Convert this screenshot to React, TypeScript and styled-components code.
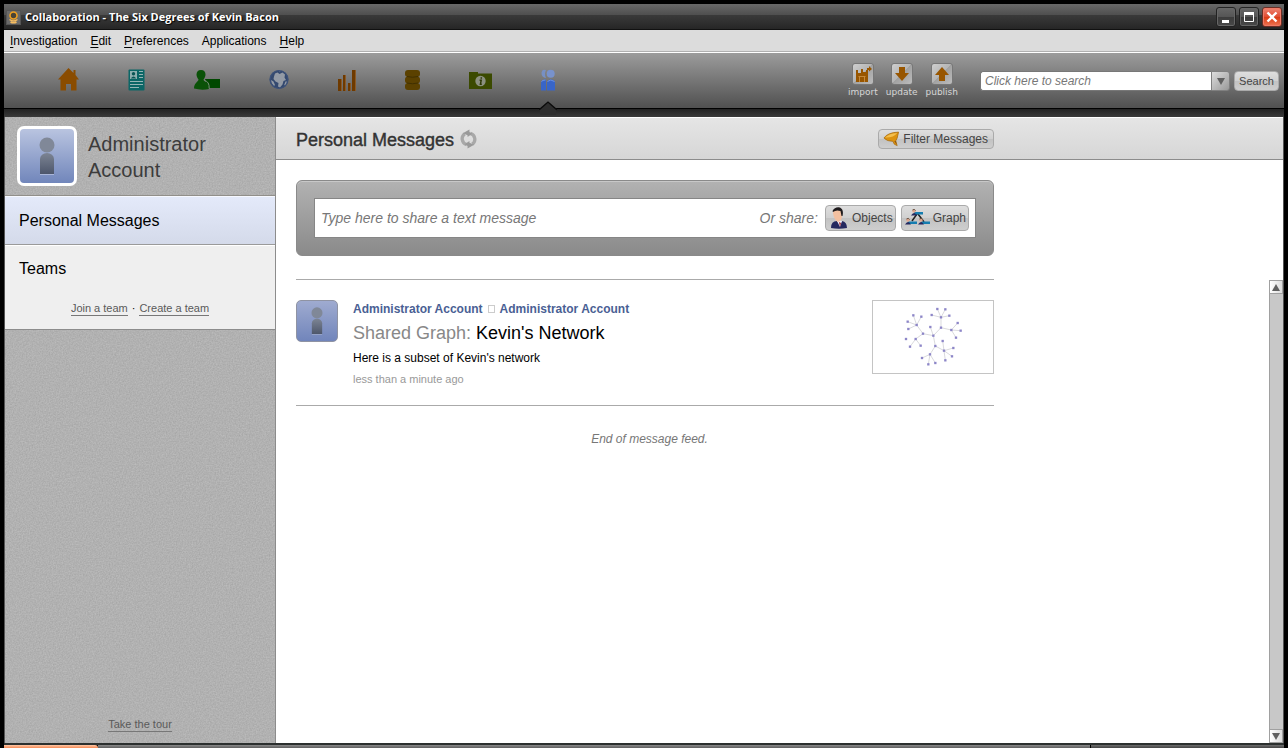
import React from "react";
import styled, { createGlobalStyle, css } from "styled-components";

const GlobalStyle = createGlobalStyle`
  *, *::before, *::after { box-sizing: border-box; }
  body {
    margin: 0;
    background: #000;
    font-family: "Liberation Sans", Arial, sans-serif;
    font-size: 12px;
    color: #000;
  }
  button, input { font-family: inherit; margin: 0; }
  svg { display: block; }
`;

const Frame = styled.div`
  display: flex;
  flex-direction: column;
  height: 100vh;
  min-height: 480px;
  padding: 4px 4px 0;
  background: #000;
`;

/* Title bar */

const TitleBar = styled.header`
  display: flex;
  align-items: center;
  height: 26px;
  flex: none;
  padding: 0 2px;
  background: linear-gradient(#686868 0, #4f4f4f 11px, #3a3a3a 11px, #262626 25px, #111 25px);
`;

const AppTitle = styled.h1`
  flex: 1;
  margin: 0 0 0 4px;
  font: bold 11px/16px "Open Sans", "Noto Sans", sans-serif;
  color: #fff;
  text-shadow: 1px 1px 1px #000;
`;

const WindowButtons = styled.div`
  display: flex;
  gap: 3px;
`;

const WindowButton = styled.button<{ $close?: boolean }>`
  width: 20px;
  height: 20px;
  padding: 0;
  display: flex;
  align-items: center;
  justify-content: center;
  border: 1px solid ${(p) => (p.$close ? "#6b2c22" : "#222")};
  border-radius: 3px;
  box-shadow: inset 0 0 0 1px ${(p) => (p.$close ? "#ee7a66" : "#666")};
  background: ${(p) =>
    p.$close
      ? "linear-gradient(#ee8573, #e0492f 50%, #d93a12 50%, #ee7452)"
      : "linear-gradient(#666, #555 50%, #3c3c3c 50%, #484848)"};
`;

/* Menu bar */

const MenuBar = styled.nav`
  display: flex;
  align-items: center;
  gap: 13px;
  height: 23px;
  flex: none;
  padding: 0 6px 1px;
  background: #dcdcdc;
  border-bottom: 1px solid #fff;
  box-shadow: inset 0 -1px #b0b0b0;
`;

const MenuButton = styled.button`
  padding: 0;
  border: 0;
  background: none;
  font-size: 12px;
  line-height: 16px;
  color: #000;
  u { text-underline-offset: 2px; }
`;

/* Toolbar */

const Toolbar = styled.div`
  display: flex;
  align-items: flex-start;
  height: 56px;
  flex: none;
  padding-left: 54px;
  padding-right: 5px;
  background: linear-gradient(#9c9c9c, #505050);
  border-bottom: 1px solid #000;
`;

const NavIcons = styled.nav`
  display: flex;
  gap: 49px;
  height: 55px;
  flex: 1;
`;

const NavButton = styled.button`
  position: relative;
  display: flex;
  align-items: center;
  height: 55px;
  padding: 0 0 2px;
  border: 0;
  background: none;
`;

const Pointer = styled.svg`
  position: absolute;
  left: 50%;
  bottom: -7px;
  transform: translateX(-50%);
`;

const Actions = styled.div`
  display: flex;
  gap: 8px;
  padding-top: 10px;
  margin-right: 22px;
`;

const Action = styled.button`
  display: flex;
  flex-direction: column;
  align-items: center;
  padding: 0;
  border: 0;
  background: none;
  font: 9px/12px "DejaVu Sans", sans-serif;
  color: #d6d6d6;
`;

const ActionTile = styled.span`
  display: flex;
  align-items: center;
  justify-content: center;
  width: 22px;
  height: 22px;
  margin-bottom: 1px;
  border: 1px solid #777;
  border-radius: 3px;
  background: linear-gradient(135deg, #cfcfcf, #b4b4b4 50%, #a2a2a2 50%, #bdbdbd);
`;

const SearchForm = styled.form`
  display: flex;
  align-items: center;
  padding-top: 18px;
`;

const raised = css`
  border: 1px solid #aaa;
  background: linear-gradient(#dedede, #d0d0d0 50%, #c2c2c2 50%, #cecece);
  color: #444;
`;

const SearchInput = styled.input`
  width: 231px;
  height: 20px;
  padding: 0 4px;
  border: 1px solid #777;
  border-right: 0;
  border-radius: 3px 0 0 3px;
  background: #fff;
  font-size: 12px;
  outline: 0;
  &::placeholder { color: #777; opacity: 1; font-style: italic; }
`;

const SearchScope = styled.button`
  display: flex;
  align-items: center;
  justify-content: center;
  width: 19px;
  height: 20px;
  padding: 0;
  border: 1px solid #808080;
  border-radius: 0 3px 3px 0;
  background: linear-gradient(135deg, #ddd, #999);
`;

const SearchButton = styled.button`
  ${raised}
  width: 45px;
  height: 20px;
  margin-left: 4px;
  padding: 0;
  border-radius: 4px;
  font-size: 11px;
`;

const DarkStrip = styled.div`
  height: 8px;
  flex: none;
  background: linear-gradient(#222, #3a3a3a);
`;

/* Body */

const Body = styled.div`
  display: flex;
  flex: 1;
  min-height: 0;
  border: solid #555;
  border-width: 0 1px;
  background: #fff;
`;

const Sidebar = styled.aside`
  position: relative;
  display: flex;
  flex-direction: column;
  width: 271px;
  flex: none;
  border-right: 1px solid #8c8c8c;
  background: #b0b0b0;
`;

const Grain = styled.svg`
  position: absolute;
  inset: 0;
  width: 100%;
  height: 100%;
`;

const Profile = styled.div`
  position: relative;
  display: flex;
  gap: 11px;
  padding: 9px 12px;
  height: 79px;
  border-bottom: 1px solid #918f8a;
`;

const ProfileName = styled.h2`
  margin: 5px 0 0;
  width: 140px;
  font-size: 20px;
  font-weight: normal;
  line-height: 26px;
  color: #3c3c3c;
`;

const Avatar = styled.span<{ $large?: boolean }>`
  display: flex;
  align-items: center;
  justify-content: center;
  flex: none;
  width: ${(p) => (p.$large ? 60 : 42)}px;
  height: ${(p) => (p.$large ? 60 : 42)}px;
  border: ${(p) => (p.$large ? "3px solid #fff" : "1px solid #8f93a3")};
  border-radius: ${(p) => (p.$large ? 7 : 5)}px;
  background: ${(p) =>
    p.$large ? "linear-gradient(#b9c4e0, #7186bb)" : "linear-gradient(#9fabd0, #7185bb)"};
`;

const SideItem = styled.a`
  position: relative;
  display: flex;
  align-items: center;
  height: 49px;
  padding: 2px 14px 0;
  border-bottom: 1px solid #9a9a9a;
  box-shadow: inset 0 1px #f6f8ff;
  background: linear-gradient(#e4eafa, #d4daea);
  font-size: 16px;
  color: #000;
  text-decoration: none;
`;

const Teams = styled.section`
  position: relative;
  height: 85px;
  padding: 14px 14px 0;
  border-top: 1px solid #fff;
  border-bottom: 1px solid #8c8c8c;
  background: #efefef;
`;

const TeamsTitle = styled.h3`
  margin: 0;
  font-size: 16px;
  font-weight: normal;
  line-height: 18px;
`;

const SideLinks = styled.p<{ $foot?: boolean }>`
  position: relative;
  display: flex;
  justify-content: center;
  gap: 4px;
  margin: ${(p) => (p.$foot ? "auto 0 11px" : "24px 0 0")};
  font-size: 11px;
  line-height: 13px;
`;

const SideLink = styled.a`
  color: #5a5a5a;
  text-decoration: none;
  border-bottom: 1px solid #777;
`;

const Main = styled.main`
  display: flex;
  flex-direction: column;
  flex: 1;
  min-width: 0;
`;

const PageHeader = styled.div`
  height: 43px;
  flex: none;
  padding: 0 20px;
  border-top: 1px solid #fff;
  border-bottom: 1px solid #8c8c8c;
  background: linear-gradient(#e5e5e5, #d6d6d6);
`;

const Column = styled.div`
  max-width: 698px;
`;

const HeaderRow = styled(Column)`
  display: flex;
  align-items: center;
  height: 41px;
`;

const PageTitle = styled.h2`
  margin: 0 6px 0 0;
  padding-top: 2px;
  font-size: 18px;
  font-weight: normal;
  line-height: 22px;
  color: #333;
  -webkit-text-stroke: 0.4px #333;
`;

const IconButton = styled.button`
  padding: 0;
  border: 0;
  background: none;
`;

const GreyButton = styled.button<{ $compact?: boolean }>`
  ${raised}
  display: flex;
  align-items: center;
  justify-content: center;
  gap: 3px;
  height: ${(p) => (p.$compact ? 20 : 26)}px;
  padding: ${(p) => (p.$compact ? "0 5px 0 4px" : "0 2px 0 3px")};
  border-radius: 4px;
  font-size: 12px;
  white-space: nowrap;
`;

const Spacer = styled.span`
  flex: 1;
`;

const ComposeArea = styled.div`
  flex: none;
  padding: 20px 20px 0;
`;

const Composer = styled(Column)`
  padding: 17px;
  border: 1px solid #8a8a8a;
  border-radius: 6px;
  box-shadow: inset 0 1px #c8c8c8;
  background: linear-gradient(#b2b2b2, #8a8a8a);
`;

const ComposeField = styled.div`
  display: flex;
  align-items: center;
  gap: 5px;
  height: 40px;
  padding: 0 6px;
  border: 1px solid #868686;
  background: #fff;
`;

const ComposeInput = styled.input`
  flex: 1;
  min-width: 0;
  height: 30px;
  padding: 0;
  border: 0;
  outline: 0;
  font-size: 14px;
  &::placeholder { color: #777; opacity: 1; font-style: italic; }
`;

const ShareLabel = styled.span`
  font-size: 14px;
  font-style: italic;
  color: #777;
  margin-right: 2px;
`;

const Divider = styled.hr`
  max-width: 698px;
  margin: 23px 0 0;
  border: 0;
  border-top: 1px solid #aaa;
`;

const FeedRow = styled.div`
  display: flex;
  flex: 1;
  min-height: 0;
`;

const Feed = styled.div`
  flex: 1;
  min-width: 0;
  overflow: hidden;
  padding: 0 20px;
`;

const Message = styled.article`
  display: flex;
  gap: 15px;
  max-width: 698px;
  padding: 20px 0 15px;
  border-bottom: 1px solid #aaa;
`;

const MessageBody = styled.div`
  flex: 1;
  min-width: 0;
`;

const People = styled.p`
  display: flex;
  align-items: center;
  gap: 5px;
  margin: 0;
  line-height: 18px;
  font-weight: bold;
  a { color: #4a5f94; text-decoration: none; }
`;

const Box = styled.span`
  width: 7px;
  height: 8px;
  border: 1px solid #ccc;
`;

const MessageTitle = styled.h3`
  margin: 0;
  font-size: 18px;
  font-weight: normal;
  line-height: 30px;
  span { color: #888; }
`;

const MessageText = styled.p`
  margin: 0;
  line-height: 20px;
`;

const MessageTime = styled.p`
  margin: 0;
  font-size: 11px;
  line-height: 22px;
  color: #999;
`;

const Thumbnail = styled.a`
  display: block;
  width: 122px;
  height: 74px;
  border: 1px solid #c4c4c4;
`;

const FeedEnd = styled.p`
  max-width: 698px;
  margin: 24px 0 0;
  padding-left: 9px;
  text-align: center;
  font-style: italic;
  line-height: 18px;
  color: #777;
`;

const ScrollTrack = styled.div`
  display: flex;
  flex-direction: column;
  justify-content: space-between;
  width: 14px;
  flex: none;
  border-left: 1px solid #a0a0a0;
  background: #c8c8c8;
`;

const ScrollButton = styled.button`
  display: flex;
  align-items: center;
  justify-content: center;
  height: 14px;
  padding: 0;
  border: 1px solid #a0a0a0;
  border-left: 0;
  background: linear-gradient(90deg, #fff, #dcdcdc);
`;

/* Bottom status bar */

const StatusBar = styled.footer`
  display: flex;
  height: 5px;
  flex: none;
  border-top: 2px solid #2c302f;
`;

const StatusSegment = styled.div<{ $kind: "progress" | "main" | "end" }>`
  ${(p) =>
    p.$kind === "progress"
      ? "flex: 0 0 94px; background: linear-gradient(#ffc9a8, #f58a55); border-top-right-radius: 3px;"
      : p.$kind === "main"
      ? "flex: 1; background: linear-gradient(#8a8a8a, #606060);"
      : "flex: 0 0 194px; background: linear-gradient(#6e6e6e, #444); border-left: 1px solid #000;"}
`;

const PersonGlyph = ({ w, h }: { w: number; h: number }) => (
  <svg width={w} height={h} viewBox="0 0 16 38">
    <defs>
      <linearGradient id="person" x1="0" y1="0" x2="0" y2="1">
        <stop offset="0" stopColor="#7c8493" />
        <stop offset="1" stopColor="#4d566b" />
      </linearGradient>
    </defs>
    <circle cx="8" cy="8" r="7.5" fill="#808898" />
    <path d="M1 37V22a7 6 0 0 1 14 0v15z" fill="url(#person)" />
    <path d="M1 37.5h14" stroke="#aab6d8" />
  </svg>
);

const AppLogo = () => (
  <svg width="15" height="15" viewBox="0 0 15 15">
    <rect width="15" height="15" fill="#555" />
    <rect x="1" y="1" width="13" height="13" fill="#6a6a6a" />
    <circle cx="7.5" cy="5.500" r="3.500" fill="#4a4436" stroke="#f0a020" strokeWidth="1.600" />
    <path d="M3.500 9.500q4 3 8 0M4.500 12q3 1.600 6 0" fill="none" stroke="#f5bc60" strokeWidth="1.500" />
  </svg>
);

const HomeIcon = () => (
  <svg width="21" height="23" viewBox="0 0 21 23">
    <path d="M10.500 0 15.500 5V2h2v5L21 11.500h-2.500V22.500h-5.500v-6.500H8v6.500H2.500V11.500H0z" fill="#8a4c00" />
  </svg>
);

const CardIcon = () => (
  <svg width="17" height="22" viewBox="0 0 17 22">
    <rect x=".5" y=".5" width="16" height="21" rx="1" fill="#0b6666" />
    <rect x="2" y="2" width="7" height="8" fill="#8fb0b0" />
    <circle cx="5.500" cy="4.700" r="1.700" fill="#0b5555" />
    <path d="M2.800 9.500q2.700-4 5.400 0z" fill="#0b5555" />
    <path d="M11 2.500h4M11 5.500h4M11 8.500h4M2 12.500h13M2 15.500h13M2 18.500h9" stroke="#95b5b5" />
  </svg>
);

const PersonCardIcon = () => (
  <svg width="26" height="20" viewBox="0 0 26 20">
    <path d="M11 9h15v9H14z" fill="#004800" />
    <path
      d="M7 0c3 0 4.500 2 4.500 4.500 0 2.300-1 3.500-2 5 0 2.500 5.500 2 5.500 7.500v2Q7.500 20.500 0 18.500C0 12.500 4.500 12 4.500 9.500c-1-1.500-2-2.700-2-5C2.500 2 4 0 7 0z"
      fill="#0a5208"
    />
    <path d="M10.500 10.500q5 1 4.700 8" fill="none" stroke="#789078" />
  </svg>
);

const GlobeIcon = () => (
  <svg width="20" height="21" viewBox="0 0 20 21">
    <circle cx="10" cy="10.500" r="9.300" fill="#34496f" />
    <path
      d="M6 4.500l2.500-1 2 1.500 3-1.500 2.500 2-.5 3 1.500 2.500-2.500 1-1 3.500-2.500 3-2-1 .5-3.500-3-1.500-2-2.500.5-2.500zM2 11l2.500 1.500L6 16l-1 1q-3-2.500-3-6zM9 1.500l3-.3-1 1.300zM16.500 12.500l1.500 0-1 3-2 1z"
      fill="#939aa5"
    />
    <circle cx="10" cy="10.500" r="9" fill="none" stroke="#3d527a" strokeWidth="1.200" />
  </svg>
);

const BarsIcon = () => (
  <svg width="18" height="22" viewBox="0 0 18 22" fill="#6e3a00">
    <path d="M0 10h4v12H0zM5 6h3v16H5zM10 14h3v8h-3zM14 1h4v21h-4z" />
    <path d="M3 10h1v12H3zM7 6h1v16H7zM12 14h1v8h-1zM17 1h1v21h-1z" fill="#8b5a28" />
  </svg>
);

const DatabaseIcon = () => (
  <svg width="15" height="22" viewBox="0 0 15 22">
    <g fill="#5b4100">
      <rect x="0" y="1" width="15" height="7" rx="3" />
      <rect x="0" y="7.500" width="15" height="7" rx="3" />
      <rect x="0" y="14" width="15" height="7" rx="3" />
      <path d="M3 5h9v12H3z" />
    </g>
    <path d="M2 7.500q5.500 1.500 11 0M2 14q5.500 1.500 11 0" fill="none" stroke="#403000" />
  </svg>
);

const FolderIcon = () => (
  <svg width="23" height="18" viewBox="0 0 23 18">
    <path d="M0 1h9v1.500h14V18H0z" fill="#3b4a00" />
    <circle cx="11.500" cy="10" r="5.200" fill="#8b9080" />
    <path d="M12.300 6.300v1.400M10.600 9.300h1.600l-.8 4h1.400" fill="none" stroke="#303a08" strokeWidth="1.500" />
  </svg>
);

const PeopleIcon = () => (
  <svg width="14" height="22" viewBox="0 0 14 22">
    <path d="M5 1Q1-.5.500 4q0 4.500 4.500 5Q3 5 5 1z" fill="#7790c4" />
    <circle cx="9.700" cy="4.800" r="4" fill="#7892cc" />
    <path d="M0 21.500V14q0-3.500 4.500-3.500h.5v11zM6 21.500V14q0-3.500 4-3.500t4 3.500v7.500z" fill="#3865c8" />
    <path d="M.5 12.500q1-1.500 4-1.500M6.500 12.500q3-3 7 0" fill="none" stroke="#6f93df" />
  </svg>
);

const ImportIcon = () => (
  <svg width="20" height="20" viewBox="0 0 20 20" fill="#985600">
    <path d="M3 6h2v3h3V5h2v3h3V6h2v12H3z" />
    <path d="M5.500 12.500h7M6.500 13v5M11.500 13v5" stroke="#c68a3c" />
    <path d="M14 4h2V2l3 3-3 2.500V6h-2z" />
  </svg>
);

const ArrowIcon = ({ up }: { up?: boolean }) => (
  <svg width="16" height="16" viewBox="0 0 16 16" fill="#985600">
    {up ? <path d="M8 1l7 8h-4v6H5V9H1z" /> : <path d="M8 15l7-8h-4V1H5v6H1z" />}
  </svg>
);

const Triangle = ({ up }: { up?: boolean }) => (
  <svg width="8" height="7" viewBox="0 0 8 7" fill="#606060">
    {up ? <path d="M4 0 8 7H0z" /> : <path d="M0 0h8L4 7z" />}
  </svg>
);

const RefreshIcon = () => (
  <svg width="17" height="20" viewBox="0 0 18 20">
    <g fill="none" stroke="#a8a8a8" strokeWidth="3.500">
      <path d="M7 16A6.500 6.500 0 0 1 5 4.500" />
      <path d="M11 4A6.500 6.500 0 0 1 13 15.500" />
    </g>
    <path d="M3 4l7-4v2.500l3 2-5 3.500V6zM15 16l-7 4v-2.500l-3-2 5-3.500v2z" fill="#9a9a9a" />
  </svg>
);

const FilterIcon = () => (
  <svg width="17" height="16" viewBox="0 0 18 16">
    <path d="M1 7Q5 1 16.500 .7L15 7l-1.500 3 1.500 5-3-1.500-1.500-3Q4 10.500 1 7z" fill="#dc920f" stroke="#a66c10" strokeWidth=".8" />
    <path d="M2 6.500Q7 2 15 1.700 11 7 2 6.500z" fill="#f4bf4d" />
    <path d="M12 10l1.500 0 1 4z" fill="#8c5410" />
  </svg>
);

const ManIcon = () => (
  <svg width="20" height="22" viewBox="0 0 20 22">
    <path d="M2 21q0-7 6-7l3 3 2-3q5 1 5 7-8 1.500-16 0z" fill="#25285f" />
    <path d="M7.500 13l3.500 7 2-6z" fill="#eef" />
    <path d="M10 15l1 5 1-4z" fill="#a02a2a" />
    <path d="M4 6q0-4 5-4 4 1 4 6 0 6-4 7-4-2-5-9z" fill="#f3c0a0" />
    <path d="M3.500 4Q6-.5 11 .5q4 2 2.500 8.500h-1L11.500 4Q7 2.500 4 5z" fill="#1e1a1c" />
  </svg>
);

const GraphIcon = () => (
  <svg width="25" height="18" viewBox="0 0 25 18">
    <path d="M12 5 7 12M13 5l6 8" stroke="#222" strokeWidth="1.500" />
    <path d="M9 3h9v2.500H9zM3 12.500h9V15H3zM16 12.500h9V15h-9z" fill="#157db0" />
    {[[9, 2], [3, 11], [16, 11]].map(([x, y]) => (
      <g key={x}>
        <path d={`M${x - 3} ${y + 4.500}q3-5 6 0z`} fill="#25285f" />
        <circle cx={x} cy={y} r="1.800" fill="#e0a890" />
        <path d={`M${x - 1.500} ${y - 1}q2-1.500 3 .5`} stroke="#432" fill="none" strokeWidth=".8" />
      </g>
    ))}
  </svg>
);

const edges = [
  [220, 137, 189, 131], [189, 131, 170, 105], [170, 105, 143, 95], [170, 105, 145, 117],
  [170, 105, 160, 76], [170, 105, 184, 80], [189, 131, 167, 147], [167, 147, 150, 170],
  [167, 147, 182, 167], [220, 137, 211, 111], [220, 137, 243, 113], [243, 113, 243, 82],
  [243, 82, 215, 75], [243, 82, 232, 57], [243, 82, 256, 58], [243, 82, 268, 77],
  [243, 113, 274, 120], [274, 120, 293, 99], [274, 120, 302, 122], [274, 120, 288, 143],
  [220, 137, 226, 168], [226, 168, 210, 193], [210, 193, 186, 204], [210, 193, 205, 223],
  [210, 193, 226, 219], [226, 168, 252, 182], [252, 182, 248, 153], [252, 182, 280, 174],
  [252, 182, 276, 199], [252, 182, 256, 211],
];
const nodes = [[220, 137], [138, 147], ...edges.map((e) => [e[2], e[3]])];

const NetworkGraph = () => (
  <svg width="120" height="72" viewBox="39 33 360 216">
    {edges.map((e, i) => (
      <line key={i} x1={e[0]} y1={e[1]} x2={e[2]} y2={e[3]} stroke="#d2d2d6" strokeWidth="2.500" />
    ))}
    {nodes.map(([x, y], i) => (
      <rect key={i} x={x - 3.500} y={y - 3.500} width="7" height="7" fill="#8d86c8" />
    ))}
  </svg>
);

const menus = ["Investigation", "Edit", "Preferences", "Applications", "Help"];

const navItems = [
  { label: "Home", Icon: HomeIcon },
  { label: "Dossier", Icon: CardIcon },
  { label: "Browser", Icon: PersonCardIcon },
  { label: "Map", Icon: GlobeIcon },
  { label: "Charts", Icon: BarsIcon },
  { label: "Data", Icon: DatabaseIcon },
  { label: "Files", Icon: FolderIcon },
  { label: "Collaboration", Icon: PeopleIcon, active: true },
];

export default function App() {
  return (
    <Frame>
      <GlobalStyle />
      <TitleBar>
        <AppLogo />
        <AppTitle>Collaboration - The Six Degrees of Kevin Bacon</AppTitle>
        <WindowButtons>
          <WindowButton aria-label="Minimize">
            <svg width="14" height="14"><path d="M3 10h7v3H3z" fill="#fff" /></svg>
          </WindowButton>
          <WindowButton aria-label="Maximize">
            <svg width="12" height="12"><path d="M1.500 2v8.500h9V2" fill="none" stroke="#fff" /><path d="M1 1h10v3H1z" fill="#fff" /></svg>
          </WindowButton>
          <WindowButton $close aria-label="Close">
            <svg width="12" height="12"><path d="M1.500 1.500l9 9M10.500 1.500l-9 9" stroke="#fff" strokeWidth="2.400" /></svg>
          </WindowButton>
        </WindowButtons>
      </TitleBar>

      <MenuBar aria-label="Main menu">
        {menus.map((m) => (
          <MenuButton key={m}>
            {m === "Applications" ? m : <><u>{m[0]}</u>{m.slice(1)}</>}
          </MenuButton>
        ))}
      </MenuBar>

      <Toolbar>
        <NavIcons aria-label="Applications">
          {navItems.map(({ label, Icon, active }) => (
            <NavButton key={label} aria-label={label} aria-current={active ? "page" : undefined}>
              <Icon />
              {active && (
                <Pointer width="18" height="14" viewBox="0 0 18 14">
                  <path d="M1 8 9 1l8 7v6H1z" fill="#2e2e2e" />
                  <path d="M0 8h1L9 1l8 7h1" fill="none" stroke="#0a0a0a" strokeWidth="1.300" />
                </Pointer>
              )}
            </NavButton>
          ))}
        </NavIcons>
        <Actions>
          <Action><ActionTile><ImportIcon /></ActionTile>import</Action>
          <Action><ActionTile><ArrowIcon /></ActionTile>update</Action>
          <Action><ActionTile><ArrowIcon up /></ActionTile>publish</Action>
        </Actions>
        <SearchForm onSubmit={(e) => e.preventDefault()}>
          <SearchInput aria-label="Search" placeholder="Click here to search" />
          <SearchScope type="button" aria-label="Search options"><Triangle /></SearchScope>
          <SearchButton>Search</SearchButton>
        </SearchForm>
      </Toolbar>
      <DarkStrip />

      <Body>
        <Sidebar>
          <Grain aria-hidden="true">
            <filter id="grain" x="0" y="0" width="100%" height="100%" colorInterpolationFilters="sRGB">
              <feTurbulence type="fractalNoise" baseFrequency="0.7" numOctaves="2" />
              <feColorMatrix values="0.12 0 0 0 0.635  0.12 0 0 0 0.635  0.12 0 0 0 0.635  0 0 0 0 1" />
            </filter>
            <rect width="100%" height="100%" filter="url(#grain)" />
          </Grain>
          <Profile>
            <Avatar $large><PersonGlyph w={16} h={38} /></Avatar>
            <ProfileName>Administrator Account</ProfileName>
          </Profile>
          <SideItem href="#messages">Personal Messages</SideItem>
          <Teams>
            <TeamsTitle>Teams</TeamsTitle>
            <SideLinks>
              <SideLink href="#join">Join a team</SideLink>
              <span>·</span>
              <SideLink href="#create">Create a team</SideLink>
            </SideLinks>
          </Teams>
          <SideLinks $foot>
            <SideLink href="#tour">Take the tour</SideLink>
          </SideLinks>
        </Sidebar>

        <Main>
          <PageHeader>
            <HeaderRow>
              <PageTitle>Personal Messages</PageTitle>
              <IconButton aria-label="Refresh"><RefreshIcon /></IconButton>
              <Spacer />
              <GreyButton $compact><FilterIcon />Filter Messages</GreyButton>
            </HeaderRow>
          </PageHeader>

          <ComposeArea>
            <Composer>
              <ComposeField>
                <ComposeInput aria-label="Message" placeholder="Type here to share a text message" />
                <ShareLabel>Or share:</ShareLabel>
                <GreyButton><ManIcon />Objects</GreyButton>
                <GreyButton><GraphIcon />Graph</GreyButton>
              </ComposeField>
            </Composer>
            <Divider />
          </ComposeArea>

          <FeedRow>
            <Feed>
              <Message>
                <Avatar><PersonGlyph w={12} h={28} /></Avatar>
                <MessageBody>
                  <People>
                    <a href="#sender">Administrator Account</a>
                    <Box />
                    <a href="#recipient">Administrator Account</a>
                  </People>
                  <MessageTitle><span>Shared Graph:</span> Kevin's Network</MessageTitle>
                  <MessageText>Here is a subset of Kevin's network</MessageText>
                  <MessageTime>less than a minute ago</MessageTime>
                </MessageBody>
                <Thumbnail href="#graph" aria-label="Kevin's Network graph"><NetworkGraph /></Thumbnail>
              </Message>
              <FeedEnd>End of message feed.</FeedEnd>
            </Feed>
            <ScrollTrack>
              <ScrollButton aria-label="Scroll up"><Triangle up /></ScrollButton>
              <ScrollButton aria-label="Scroll down"><Triangle /></ScrollButton>
            </ScrollTrack>
          </FeedRow>
        </Main>
      </Body>

      <StatusBar>
        <StatusSegment $kind="progress" />
        <StatusSegment $kind="main" />
        <StatusSegment $kind="end" />
      </StatusBar>
    </Frame>
  );
}
